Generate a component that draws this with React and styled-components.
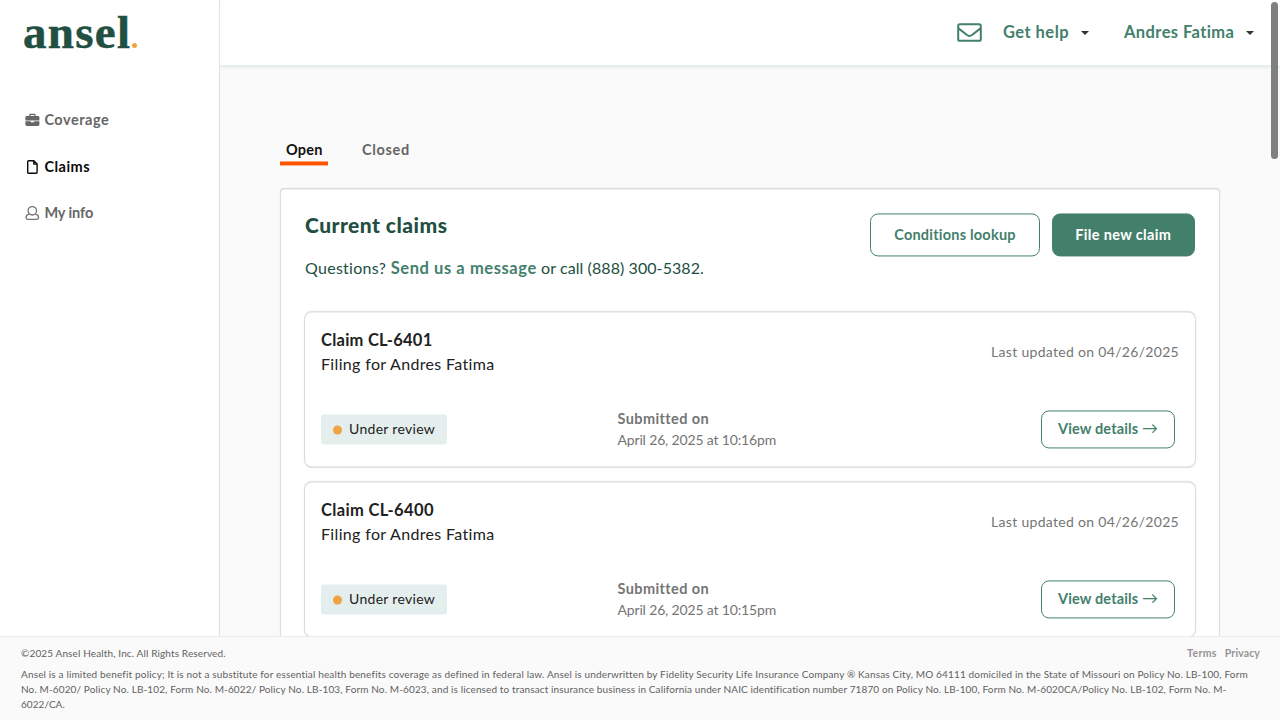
import React from 'react';
import styled, { createGlobalStyle } from 'styled-components';

const Global = createGlobalStyle`
  * { box-sizing: border-box; }
  html, body { margin: 0; padding: 0; }
  body {
    height: 720px;
    overflow: hidden;
    background: #fafafa;
    color: #212121;
    font-family: Lato, "Open Sans", sans-serif;
    font-variant-ligatures: none;
  }
  p, h1, h2, h3 { margin: 0; }
`;

const Page = styled.div`
  position: relative;
  display: flex;
  flex-direction: column;
  width: 1280px;
  height: 720px;
  overflow: hidden;
`;
const Body = styled.div`
  display: flex;
  flex: 1;
  min-height: 0;
`;
const Text = styled.span`
  letter-spacing: ${(p) => p.$track || 0}px;
  white-space: pre;
`;

const Sidebar = styled.aside`
  width: 220px;
  flex: none;
  background: #fff;
  border-right: 1px solid #dedede;
`;
const Logo = styled.div`
  display: flex;
  align-items: flex-end;
  height: 48px;
  padding-left: 23px;
  color: #224f42;
`;
const LogoWord = styled.span`
  height: 37px;
  font: 700 47px/42px "Liberation Serif", serif;
  letter-spacing: 1.3px;
  -webkit-text-stroke: 0.5px #224f42;
`;
const LogoDot = styled.span`
  width: 5px;
  height: 5px;
  margin-left: 1px;
  border-radius: 50%;
  background: #f1a344;
`;
const Nav = styled.nav`
  display: flex;
  flex-direction: column;
  gap: 22.5px;
  padding: 60px 0 0 25px;
`;
const NavItem = styled.a`
  display: flex;
  align-items: center;
  gap: 4.4px;
  height: 24px;
  line-height: 24px;
  font-size: 14.5px;
  font-weight: 700;
  color: ${(p) => (p.$active ? '#0b0b0b' : '#666')};
  svg { flex: none; }
`;

const Content = styled.div`
  display: flex;
  flex-direction: column;
  flex: 1;
  min-width: 0;
`;
const Header = styled.header`
  display: flex;
  align-items: center;
  justify-content: flex-end;
  height: 65px;
  flex: none;
  padding-right: 26px;
  background: #fff;
  box-shadow: 0 3px 3px #e4eeeb;
`;
const MenuLink = styled.a`
  display: flex;
  align-items: center;
  width: ${(p) => p.$w}px;
  margin-left: ${(p) => p.$gap}px;
  justify-content: space-between;
  font-size: 16.5px;
  line-height: 20px;
  font-weight: 700;
  color: #43806c;
  ${Text} { padding-bottom: 2px; }
`;
const Caret = styled.span`
  border: 4px solid transparent;
  border-top-color: #333;
  border-bottom: 0;
`;

const Main = styled.main`
  display: flex;
  flex-direction: column;
  padding: 74px 60px 0;
  transform: translateY(0.45px);
`;
const Tabs = styled.div`
  display: flex;
  gap: 27.8px;
  margin-bottom: 23px;
`;
const Tab = styled.a`
  height: 26px;
  padding: 0 5.6px 0 6px;
  line-height: 21px;
  font-size: 14.5px;
  font-weight: 700;
  color: ${(p) => (p.$active ? '#111' : '#666')};
  border-bottom: 4px solid ${(p) => (p.$active ? '#ff5500' : 'transparent')};
`;
const Panel = styled.section`
  flex: none;
  height: 520px;
  padding: 24px 23px;
  background: #fff;
  border: 1px solid #dedede;
  border-radius: 4px;
  box-shadow: 0 0 1px #d4d4d4;
`;
const PanelHead = styled.div`
  display: flex;
  justify-content: space-between;
  height: 98px;
  padding: 0 1px;
`;
const Title = styled.h2`
  height: 42px;
  line-height: 24px;
  font-size: 21px;
  font-weight: 900;
  color: #224f42;
`;
const Question = styled.p`
  line-height: 26px;
  font-size: 16px;
  color: #224f42;
`;
const MessageLink = styled.a`
  font-size: 16.5px;
  font-weight: 700;
  color: #43806c;
`;
const Actions = styled.div`
  display: flex;
  gap: 11.5px;
`;
const Button = styled.button`
  width: ${(p) => p.$w}px;
  height: ${(p) => p.$h || 43}px;
  padding: 0 0 ${(p) => p.$lift || 0}px;
  border: 1px solid #43806c;
  border-radius: 8px;
  background: ${(p) => (p.$solid ? '#43806c' : '#fff')};
  color: ${(p) => (p.$solid ? '#fff' : '#43806c')};
  font: 700 14.5px/17px Lato, sans-serif;
`;
const Arrow = styled.span`
  font-size: 16px;
  font-weight: 400;
  line-height: 14px;
`;
const Claim = styled.article`
  display: flex;
  flex-direction: column;
  justify-content: space-between;
  height: 156px;
  margin-bottom: 14px;
  padding: 16px 16px 16px;
  border: 1px solid #d9d9d9;
  border-radius: 8px;
  box-shadow: 0 0 1px #d4d4d4;
`;
const ClaimTop = styled.div`
  display: flex;
  align-items: center;
  justify-content: space-between;
`;
const ClaimName = styled.h3`
  font-size: 16.5px;
  line-height: 24px;
  font-weight: 700;
`;
const ClaimFor = styled.p`
  font-size: 16px;
  line-height: 24px;
`;
const Updated = styled.span`
  padding-bottom: 2px;
  font-size: 14px;
  color: #757575;
`;
const ClaimBottom = styled.div`
  display: grid;
  grid-template-columns: 296.5px 1fr 134px;
  align-items: center;
  padding-right: 4px;
`;
const Badge = styled.span`
  display: flex;
  align-items: center;
  gap: 7px;
  width: 126px;
  height: 30px;
  padding-left: 12px;
  border-radius: 3px;
  background: #e4eeed;
  font-size: 14px;
  ${Text} { padding-bottom: 2px; }
`;
const Dot = styled.span`
  width: 9px;
  height: 9px;
  border-radius: 50%;
  background: #f1a344;
`;
const Submitted = styled.div`
  font-size: 14px;
  line-height: 21px;
  color: #757575;
  b { font-size: 14.5px; }
`;

const Footer = styled.footer`
  position: relative;
  flex: none;
  height: 84px;
  padding: 9px 20px 0 21px;
  background: #fafafa;
  border-top: 1px solid #ebebeb;
  font-size: 10px;
  line-height: 15px;
  color: #616161;
`;
const FooterTop = styled.div`
  display: flex;
  justify-content: space-between;
  margin-bottom: 6px;
`;
const FooterLinks = styled.div`
  display: flex;
  gap: 8px;
  font-size: 10.5px;
  font-weight: 700;
  color: #949494;
`;
const ScrollThumb = styled.div`
  position: absolute;
  top: 2px;
  right: 2px;
  width: 7px;
  height: 157px;
  border-radius: 4px;
  background: #7f7f7f;
`;

const Briefcase = () => (
  <svg width="15" height="14" viewBox="0 0 15 14" fill="#666">
    <path fillRule="evenodd" d="M4.2 3V1.8A1.1 1.1 0 0 1 5.3.7h4.2a1.1 1.1 0 0 1 1.1 1.1V3h2.4A1.4 1.4 0 0 1 14.4 4.4v3.2H.4V4.4A1.4 1.4 0 0 1 1.8 3zM5.5 3h3.8V2H5.5z" />
    <path d="M.4 8.3h5.2v.5q0 .5.5.5h2.6q.5 0 .5-.5v-.5h5.2v3.3a1.4 1.4 0 0 1-1.4 1.4H1.8A1.4 1.4 0 0 1 .4 11.6z" />
  </svg>
);
const FileIcon = () => (
  <svg width="15" height="16" viewBox="0 0 15 16" fill="none" stroke="#0b0b0b" strokeWidth="1.4" strokeLinejoin="round">
    <path d="M3.7 1.7h5.2l3.2 3.2v8.4a1 1 0 0 1-1 1H3.7a1 1 0 0 1-1-1V2.7a1 1 0 0 1 1-1zM8.8 1.8v3.3h3.3" />
  </svg>
);
const UserIcon = () => (
  <svg width="15" height="16" viewBox="0 0 15 16" fill="none" stroke="#757575" strokeWidth="1.3">
    <circle cx="7.3" cy="5.8" r="4.2" />
    <path d="M4.2 9.1C2 9.4 1 10.8 1 12.6c0 1 .7 1.7 1.7 1.7h9.2c1 0 1.7-.7 1.7-1.7 0-1.8-1-3.2-3.2-3.5" />
  </svg>
);
const MailIcon = () => (
  <svg width="25" height="20" viewBox="0 0 25 20" fill="none" stroke="#43806c" strokeWidth="2" strokeLinejoin="round">
    <rect x="1.2" y="1.2" width="22.6" height="16.6" rx="1.6" />
    <path d="M1.5 5.4 10 12q2.5 1.8 5 0l8.5-6.6" />
  </svg>
);

const claims = [
  { id: 'CL-6401', time: '10:16pm', track: 0.25 },
  { id: 'CL-6400', time: '10:15pm', track: 0.35 },
];

const ClaimCard = ({ id, time, track }) => (
  <Claim>
    <ClaimTop>
      <div>
        <ClaimName><Text $track={track}>Claim {id}</Text></ClaimName>
        <ClaimFor><Text $track={0.34}>Filing for Andres Fatima</Text></ClaimFor>
      </div>
      <Updated><Text $track={0.31}>Last updated on 04/26/2025</Text></Updated>
    </ClaimTop>
    <ClaimBottom>
      <Badge><Dot /><Text $track={0.3}>Under review</Text></Badge>
      <Submitted>
        <b><Text $track={0.4}>Submitted on</Text></b><br />
        <Text $track={-0.16}>April 26, 2025 at {time}</Text>
      </Submitted>
      <Button $w={134} $h={38} $lift={2}><Text $track={0.15}>View details </Text><Arrow>→</Arrow></Button>
    </ClaimBottom>
  </Claim>
);

export default function App() {
  return (
    <Page>
      <Global />
      <Body>
        <Sidebar>
          <Logo><LogoWord>ansel</LogoWord><LogoDot /></Logo>
          <Nav>
            <NavItem><Briefcase /><Text $track={0.53}>Coverage</Text></NavItem>
            <NavItem $active><FileIcon /><Text $track={0.48}>Claims</Text></NavItem>
            <NavItem><UserIcon /><Text $track={-0.09}>My info</Text></NavItem>
          </Nav>
        </Sidebar>
        <Content>
          <Header>
            <MailIcon />
            <MenuLink $w={86} $gap={21}><Text $track={0.46}>Get help</Text><Caret /></MenuLink>
            <MenuLink $w={130} $gap={35}><Text $track={0.4}>Andres Fatima</Text><Caret /></MenuLink>
          </Header>
          <Main>
            <Tabs>
              <Tab $active><Text $track={0.24}>Open</Text></Tab>
              <Tab><Text $track={0.63}>Closed</Text></Tab>
            </Tabs>
            <Panel>
              <PanelHead>
                <div>
                  <Title><Text $track={0.47}>Current claims</Text></Title>
                  <Question>
                    <Text $track={0.28}>Questions? </Text>
                    <MessageLink><Text $track={0.58}>Send us a message</Text></MessageLink>
                    <Text $track={0.08}> or call (888) 300-5382.</Text>
                  </Question>
                </div>
                <Actions>
                  <Button $w={170}><Text $track={0.22}>Conditions lookup</Text></Button>
                  <Button $w={143.5} $solid><Text $track={0.34}>File new claim</Text></Button>
                </Actions>
              </PanelHead>
              {claims.map((c) => <ClaimCard key={c.id} {...c} />)}
            </Panel>
          </Main>
        </Content>
      </Body>
      <Footer>
        <FooterTop>
          <Text $track={0.13}>©2025 Ansel Health, Inc. All Rights Reserved.</Text>
          <FooterLinks><Text $track={0.35}>Terms</Text><Text $track={0.12}>Privacy</Text></FooterLinks>
        </FooterTop>
        <Text as="p" $track={0.157}>Ansel is a limited benefit policy; It is not a substitute for essential health benefits coverage as defined in federal law. Ansel is underwritten by Fidelity Security Life Insurance Company ® Kansas City, MO 64111 domiciled in the State of Missouri on Policy No. LB-100, Form</Text>
        <Text as="p" $track={0.123}>No. M-6020/ Policy No. LB-102, Form No. M-6022/ Policy No. LB-103, Form No. M-6023, and is licensed to transact insurance business in California under NAIC identification number 71870 on Policy No. LB-100, Form No. M-6020CA/Policy No. LB-102, Form No. M-</Text>
        <Text as="p" $track={0.05}>6022/CA.</Text>
      </Footer>
      <ScrollThumb />
    </Page>
  );
}
